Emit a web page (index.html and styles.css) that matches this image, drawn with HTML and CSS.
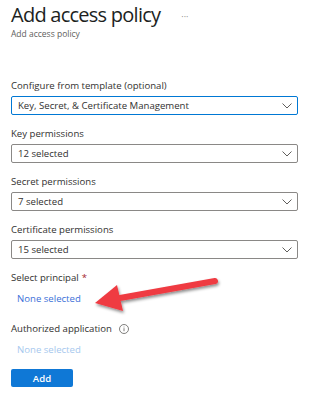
FILE: index.html
```html
<!DOCTYPE html>
<html lang="en">
<head>
<meta charset="utf-8">
<link rel="stylesheet" href="styles.css">
</head>
<body>
<div class="page">
  <header class="header">
    <div class="title-row">
      <h1 class="title">Add access policy</h1>
      <span class="more">···</span>
    </div>
    <div class="subtitle">Add access policy</div>
  </header>

  <div class="form">
    <div class="field">
      <div class="label">Configure from template (optional)</div>
      <div class="select focused">
        <span>Key, Secret, &amp; Certificate Management</span>
        <svg class="chev" width="10" height="6" viewBox="0 0 10 6"><path d="M0.5 0.5 L5 5 L9.5 0.5" fill="none" stroke="#605e5c" stroke-width="1"/></svg>
      </div>
    </div>
    <div class="field">
      <div class="label">Key permissions</div>
      <div class="select">
        <span>12 selected</span>
        <svg class="chev" width="10" height="6" viewBox="0 0 10 6"><path d="M0.5 0.5 L5 5 L9.5 0.5" fill="none" stroke="#605e5c" stroke-width="1"/></svg>
      </div>
    </div>
    <div class="field">
      <div class="label">Secret permissions</div>
      <div class="select">
        <span>7 selected</span>
        <svg class="chev" width="10" height="6" viewBox="0 0 10 6"><path d="M0.5 0.5 L5 5 L9.5 0.5" fill="none" stroke="#605e5c" stroke-width="1"/></svg>
      </div>
    </div>
    <div class="field">
      <div class="label">Certificate permissions</div>
      <div class="select">
        <span>15 selected</span>
        <svg class="chev" width="10" height="6" viewBox="0 0 10 6"><path d="M0.5 0.5 L5 5 L9.5 0.5" fill="none" stroke="#605e5c" stroke-width="1"/></svg>
      </div>
    </div>

    <div class="field principal">
      <div class="label">Select principal <span class="req">*</span></div>
      <a class="link">None selected</a>
    </div>
    <div class="field app">
      <div class="label">Authorized application
        <svg class="info" width="10" height="10" viewBox="0 0 10 10"><circle cx="5" cy="5" r="4.5" fill="none" stroke="#605e5c" stroke-width="0.8"/><rect x="4.6" y="4.2" width="0.8" height="3" fill="#605e5c"/><rect x="4.6" y="2.6" width="0.8" height="0.8" fill="#605e5c"/></svg>
      </div>
      <a class="link disabled">None selected</a>
    </div>
    <button class="btn">Add</button>
  </div>

  <svg class="arrow" width="140" height="50" viewBox="0 0 140 50">
    <defs>
      <filter id="sh" x="-20%" y="-40%" width="140%" height="180%">
        <feDropShadow dx="1" dy="2" stdDeviation="1.5" flood-color="#000" flood-opacity="0.45"/>
      </filter>
    </defs>
    <g filter="url(#sh)">
      <line x1="125" y1="6" x2="30" y2="23" stroke="#ef3b42" stroke-width="6" stroke-linecap="round"/>
      <polygon points="5,28 27,10 33,36" fill="#ef3b42"/>
    </g>
  </svg>
</div>
</body>
</html>
```
FILE: styles.css
```css
html, body {
  margin: 0;
  padding: 0;
  background: #ffffff;
}
body {
  font-family: "Open Sans", "Noto Sans", sans-serif;
  color: #323130;
}
.page {
  position: relative;
  width: 310px;
  height: 400px;
  padding: 0 12px 0 11px;
  box-sizing: border-box;
  overflow: hidden;
}
.header {
  padding-top: 2px;
}
.title-row {
  display: flex;
  align-items: center;
}
.title {
  margin: 0;
  font-size: 20px;
  font-weight: 400;
  line-height: 26px;
  color: #201f1e;
  letter-spacing: -0.75px;
}
.more {
  margin-left: 21px;
  margin-top: 2px;
  font-size: 9px;
  color: #8a8886;
}
.subtitle {
  font-size: 8.5px;
  line-height: 12px;
  color: #605e5c;
}
.form {
  margin-top: 39px;
}
.field {
  margin-bottom: 12px;
}
.label {
  font-size: 9.6px;
  line-height: 14px;
  margin-bottom: 3px;
  color: #323130;
  display: flex;
  align-items: center;
}
.req {
  color: #a4262c;
  margin-left: 3px;
}
.select {
  height: 19px;
  box-sizing: border-box;
  border: 1px solid #8a8886;
  border-radius: 2px;
  display: flex;
  align-items: center;
  justify-content: space-between;
  padding: 0 5px 0 6px;
  font-size: 9.6px;
  color: #323130;
}
.select.focused {
  border-color: #0078d4;
}
.chev {
  display: block;
}
.principal {
  margin-bottom: 16px;
}
.principal .label {
  margin-bottom: 7px;
}
.link {
  display: block;
  padding-left: 6px;
  font-size: 9.6px;
  line-height: 14px;
  color: #3b6fd8;
}
.link.disabled {
  color: #a6c8ee;
}
.app .label {
  margin-bottom: 7px;
}
.info {
  margin-left: 7px;
}
.btn {
  display: block;
  margin-top: 5px;
  width: 62px;
  height: 18px;
  border: none;
  border-radius: 2px;
  background: #0f78d6;
  color: #ffffff;
  font-family: "Open Sans", "Noto Sans", sans-serif;
  font-size: 9.6px;
  font-weight: 600;
  padding: 0;
}
.arrow {
  position: absolute;
  left: 90px;
  top: 275px;
}
```
